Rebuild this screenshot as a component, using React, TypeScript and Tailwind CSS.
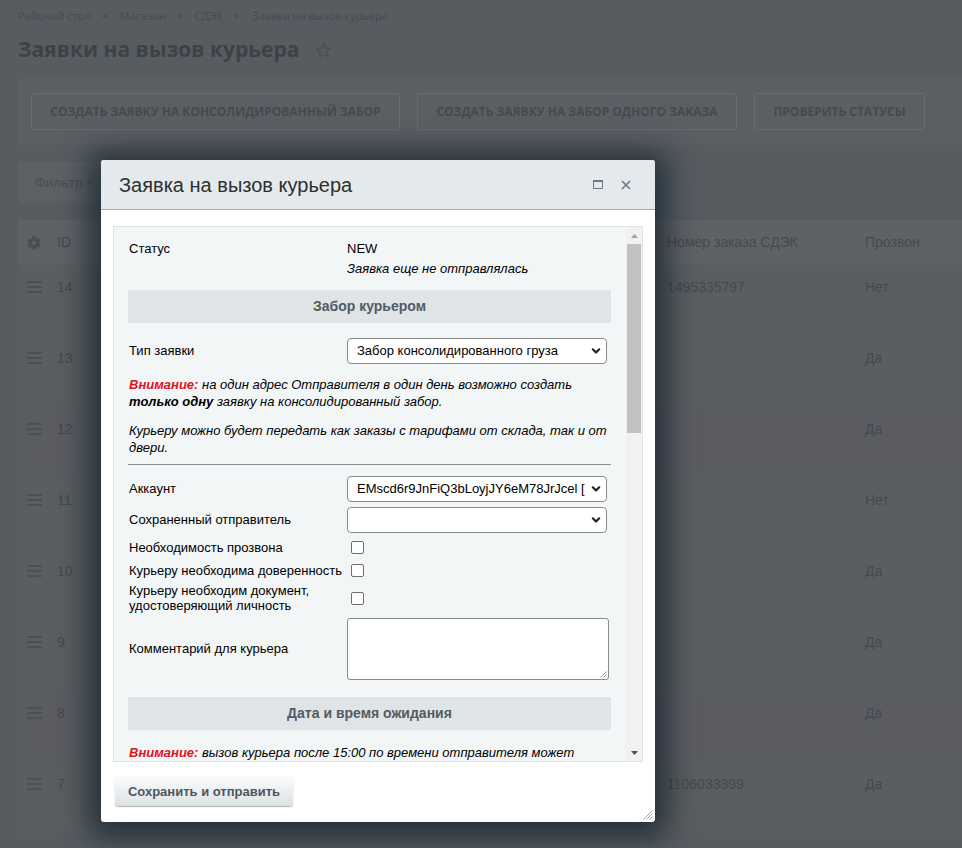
import { FaCog } from "react-icons/fa";

const rows = [
  { id: "14", order: "1495335797", call: "Нет", hl: false },
  { id: "13", order: "", call: "Да", hl: false },
  { id: "12", order: "", call: "Да", hl: true },
  { id: "11", order: "", call: "Нет", hl: false },
  { id: "10", order: "", call: "Да", hl: false },
  { id: "9", order: "", call: "Да", hl: false },
  { id: "8", order: "", call: "Да", hl: true },
  { id: "7", order: "1106033399", call: "Да", hl: false },
];

const actions = [
  { label: "Создать заявку на консолидированный забор", w: "w-[369px]" },
  { label: "Создать заявку на забор одного заказа", w: "w-[320px]" },
  { label: "Проверить статусы", w: "w-[171px]" },
];

function Hamburger() {
  return (
    <div className="flex w-[15px] flex-col gap-[3px]">
      <span className="h-[2px] bg-[#4c5054]" />
      <span className="h-[2px] bg-[#4c5054]" />
      <span className="h-[2px] bg-[#4c5054]" />
    </div>
  );
}

function Page() {
  return (
    <div className="pl-[18px] pt-[8px] font-['Open_Sans',sans-serif]">
      {/* Breadcrumbs */}
      <div className="flex h-[16px] items-center text-[11px] text-[#474b50]">
        <span>Рабочий стол</span>
        <span className="mx-[12px] text-[7px] text-[#4d5155]">▶</span>
        <span>Магазин</span>
        <span className="mx-[12px] text-[7px] text-[#4d5155]">▶</span>
        <span>СДЭК</span>
        <span className="mx-[12px] text-[7px] text-[#4d5155]">▶</span>
        <span>Заявки на вызов курьера</span>
      </div>

      {/* Title */}
      <div className="mt-[11px] flex h-[30px] items-center">
        <h1 className="text-[21px] font-bold text-[#3e4246]">Заявки на вызов курьера</h1>
        <svg className="ml-[16px]" width="17" height="17" viewBox="0 0 24 24" fill="none" stroke="#4c5055" strokeWidth="2">
          <path d="M12 2.5l2.9 6.1 6.6.8-4.9 4.6 1.3 6.6L12 17.3l-5.9 3.3 1.3-6.6-4.9-4.6 6.6-.8z" />
        </svg>
      </div>

      {/* Action buttons */}
      <div className="mt-[13px] flex gap-[17px] bg-[#5b5f64] px-[13px] py-[15px]">
        {actions.map((a) => (
          <div
            key={a.label}
            className={`flex h-[37px] shrink-0 items-center justify-center whitespace-nowrap rounded-[2px] border border-[#686c70] text-[12px] font-bold uppercase text-[#45494e] ${a.w}`}
          >
            {a.label}
          </div>
        ))}
      </div>

      {/* Filter */}
      <div className="mt-[17px] flex h-[41px] w-[460px] items-center rounded-[3px] bg-[#5d6165] pl-[17px] text-[13px] text-[#484c50]">
        Фильтр +
      </div>

      {/* Table */}
      <div className="mt-[17px] font-['Liberation_Sans',Arial,sans-serif] text-[14px] text-[#45494d]">
        <div className="grid h-[45px] grid-cols-[39px_610px_198px_1fr] items-center bg-[#5e6266]">
          <div className="pl-[9px] text-[14px] text-[#4a4e52]">
            <FaCog />
          </div>
          <div>ID</div>
          <div>Номер заказа СДЭК</div>
          <div>Прозвон</div>
        </div>
        {rows.map((r) => (
          <div
            key={r.id}
            className={`grid h-[71px] grid-cols-[39px_610px_198px_1fr] items-start pt-[12px] ${r.hl ? "bg-[#5b5c62]" : "bg-[#5a5e61]"}`}
          >
            <div className="pl-[9px] pt-[4px]">
              <Hamburger />
            </div>
            <div>{r.id}</div>
            <div>{r.order}</div>
            <div>{r.call}</div>
          </div>
        ))}
      </div>
    </div>
  );
}

function Chevron() {
  return (
    <svg className="absolute right-[5px] top-1/2 -translate-y-1/2" width="10" height="10" viewBox="0 0 10 10" fill="none" stroke="#222" strokeWidth="2.2" strokeLinecap="round" strokeLinejoin="round">
      <path d="M1.8 3.3L5 6.5l3.2-3.2" />
    </svg>
  );
}

function Select({ value }: { value: string }) {
  return (
    <div className="relative flex h-[26px] w-[260px] items-center rounded-[4px] border border-[#8a8a8a] bg-white pl-[9px] pr-[22px]">
      <span className="whitespace-nowrap text-[13px] text-black">{value}</span>
      <Chevron />
    </div>
  );
}

function Checkbox() {
  return <div className="ml-[4px] h-[13px] w-[13px] rounded-[2px] border border-[#6f6f6f] bg-white" />;
}

function Section({ title }: { title: string }) {
  return (
    <div className="flex h-[33px] items-center justify-center bg-[#dfe4e6] text-[14px] font-bold text-[#525b62]">
      {title}
    </div>
  );
}

function Scrollbar() {
  return (
    <div className="flex w-[16px] flex-col bg-[#f1f1f1]">
      <div className="flex h-[17px] items-center justify-center">
        <svg width="7" height="4" viewBox="0 0 7 4">
          <path d="M0 4L3.5 0 7 4z" fill="#a3a3a3" />
        </svg>
      </div>
      <div className="mx-[1px] h-[189px] bg-[#c1c1c1]" />
      <div className="flex-1" />
      <div className="flex h-[17px] items-center justify-center">
        <svg width="7" height="4" viewBox="0 0 7 4">
          <path d="M0 0L3.5 4 7 0z" fill="#505050" />
        </svg>
      </div>
    </div>
  );
}

function CourierModal() {
  return (
    <div className="absolute left-[101px] top-[160px] flex h-[662px] w-[554px] flex-col rounded-[3px] bg-white font-['Liberation_Sans',Arial,sans-serif] text-[13px] text-black shadow-[0_4px_30px_12px_rgba(20,35,45,0.8)]">
      {/* Header */}
      <div className="flex h-[50px] items-center rounded-t-[3px] border-b border-[#a6acb0] bg-[#e3e9ec] pl-[18px] pr-[24px]">
        <div className="flex-1 text-[20px] text-[#2f2f2f]">Заявка на вызов курьера</div>
        <div className="mr-[18px] h-[9px] w-[10px] border border-t-2 border-[#6c7980]" />
        <svg width="10" height="10" viewBox="0 0 10 10" stroke="#6c7980" strokeWidth="1.6">
          <path d="M1 1l8 8M9 1l-8 8" />
        </svg>
      </div>

      {/* Scrollable body */}
      <div className="px-[12px] pt-[16px]">
        <div className="flex h-[536px] border border-[#dfe3e5] bg-[#f3f6f7]">
          <div className="flex-1 overflow-hidden pl-[14px] pr-[15px]">
            <div className="grid grid-cols-[219px_1fr] pt-[12px] leading-[20px]">
              <div className="pl-[1px]">Статус</div>
              <div>
                <div>NEW</div>
                <div className="italic">Заявка еще не отправлялась</div>
              </div>
            </div>

            <div className="mt-[11px]">
              <Section title="Забор курьером" />
            </div>

            <div className="mt-[15px] grid grid-cols-[219px_1fr] items-center">
              <div className="pl-[1px]">Тип заявки</div>
              <Select value="Забор консолидированного груза" />
            </div>

            <p className="mt-[12px] pl-[1px] italic leading-[17px]">
              <span className="font-bold text-[#e0121a]">Внимание:</span> на один адрес Отправителя в один день возможно создать{" "}
              <span className="font-bold">только одну</span> заявку на консолидированный забор.
            </p>
            <p className="mt-[12px] pl-[1px] italic leading-[17px]">
              Курьеру можно будет передать как заказы с тарифами от склада, так и от двери.
            </p>

            <div className="mt-[8px] h-px bg-[#8c9093]" />

            <div className="mt-[11px] grid grid-cols-[219px_1fr] items-center">
              <div className="pl-[1px]">Аккаунт</div>
              <Select value="EMscd6r9JnFiQ3bLoyjJY6eM78JrJcel [" />
            </div>
            <div className="mt-[5px] grid grid-cols-[219px_1fr] items-center">
              <div className="pl-[1px]">Сохраненный отправитель</div>
              <Select value="" />
            </div>

            <div className="mt-[3px] grid h-[23px] grid-cols-[219px_1fr] items-center">
              <div className="pl-[1px]">Необходимость прозвона</div>
              <Checkbox />
            </div>
            <div className="grid h-[23px] grid-cols-[219px_1fr] items-center">
              <div className="whitespace-nowrap pl-[1px]">Курьеру необходима доверенность</div>
              <Checkbox />
            </div>
            <div className="grid grid-cols-[219px_1fr] items-center py-[1px] leading-[15px]">
              <div className="pl-[1px]">
                Курьеру необходим документ,
                <br />
                удостоверяющий личность
              </div>
              <Checkbox />
            </div>

            <div className="mt-[4px] grid grid-cols-[219px_1fr] items-center">
              <div className="pl-[1px]">Комментарий для курьера</div>
              <div className="relative h-[62px] w-[262px] rounded-[3px] border border-[#8a8a8a] bg-white">
                <svg className="absolute bottom-[1px] right-[1px]" width="8" height="8" viewBox="0 0 8 8" stroke="#9a9a9a" strokeWidth="1">
                  <path d="M7.5 1.5L1.5 7.5M7.5 4.5L4.5 7.5" />
                </svg>
              </div>
            </div>

            <div className="mt-[17px]">
              <Section title="Дата и время ожидания" />
            </div>

            <p className="mt-[14px] whitespace-nowrap pl-[1px] italic leading-[17px]">
              <span className="font-bold text-[#e0121a]">Внимание:</span> вызов курьера после 15:00 по времени отправителя может
            </p>
          </div>
          <Scrollbar />
        </div>
      </div>

      {/* Footer */}
      <div className="relative flex-1 pl-[14px] pt-[15px]">
        <div className="flex h-[29px] w-[178px] items-center justify-center rounded-[4px] bg-gradient-to-b from-[#fbfcfc] to-[#dce2e5] text-[13px] font-bold text-[#4d565d] shadow-[0_1px_1px_rgba(0,0,0,0.3),0_0_1px_rgba(0,0,0,0.2)]">
          Сохранить и отправить
        </div>
        <svg className="absolute bottom-[2px] right-[2px]" width="11" height="11" viewBox="0 0 11 11" stroke="#a0a4a7" strokeWidth="1">
          <path d="M10.5 1.5L1.5 10.5M10.5 4.5L4.5 10.5M10.5 7.5L7.5 10.5" />
        </svg>
      </div>
    </div>
  );
}

export default function App() {
  return (
    <div className="relative h-[848px] w-[962px] overflow-hidden bg-[#575c61]">
      <Page />
      <CourierModal />
    </div>
  );
}
